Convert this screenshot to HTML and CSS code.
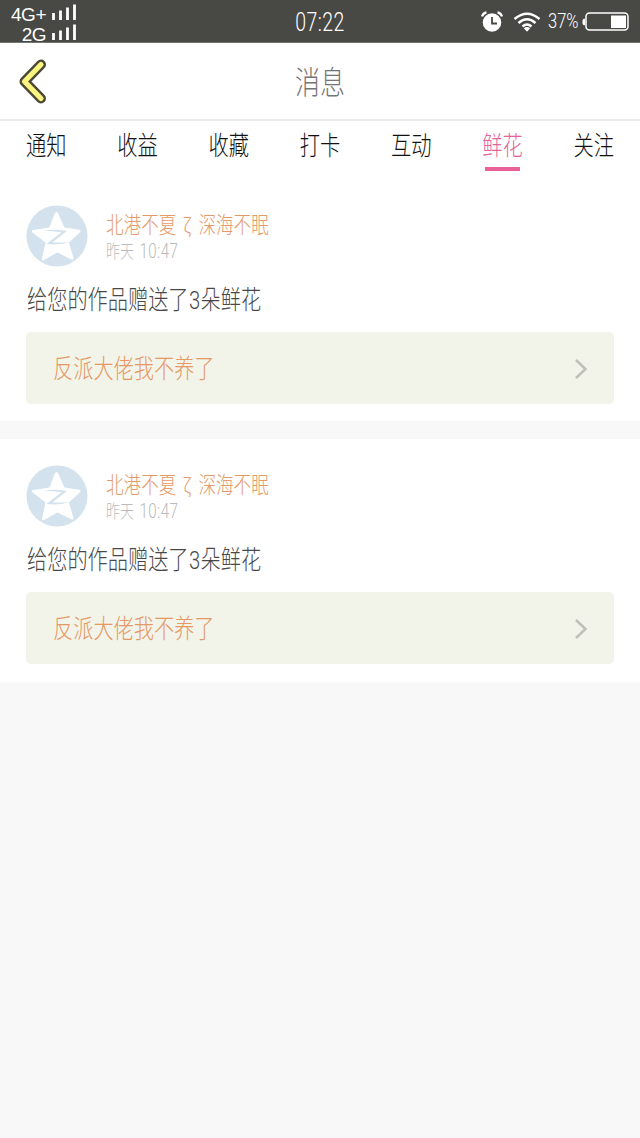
FILE: index.html
```html
<!DOCTYPE html>
<html lang="zh-CN">
<head>
<meta charset="utf-8">
<title>消息</title>
<link rel="stylesheet" href="styles.css">
</head>
<body>
<svg class="defs" aria-hidden="true">
  <symbol id="star" viewBox="0 0 62 62">
    <circle cx="31" cy="31" r="30.500" fill="#d3e2ed"/>
    <path d="M30.500 7Q31.500 7 32.200 8.500L38.500 22.500L53.500 24.800Q55.500 25.500 54 27.300L43 37.500L47.500 53Q47.500 55.500 45.500 54.500L31.500 47.500L18 55Q15.500 56 16 53.500L19.500 37.500L6.500 27.500Q5 25.800 7 25L23.500 22.500L28.700 8.500Q29.500 7 30.500 7Z" fill="#fff"/>
    <path d="M18 25.500Q29 23.700 41 26L26.500 37.300Q34 38 44 37Q34 40.500 20.500 39L35.500 27.300Q27 26 18 25.500Z" fill="#d3e2ed"/>
  </symbol>
</svg>
<header class="status">
  <div class="signals">
    <div class="signal"><span class="net">4G+</span><svg width="25" height="18"><path d="M1.500 10v7M8.500 7.500v9.500M15.500 4.500v12.500M22.500 1.500v15.500" stroke="#fff" stroke-width="2.800"/></svg></div>
    <div class="signal"><span class="net">2G</span><svg width="25" height="18"><path d="M1.500 10v7M8.500 7.500v9.500M15.500 4.500v12.500M22.500 1.500v15.500" stroke="#fff" stroke-width="2.800"/></svg></div>
  </div>
  <span class="clock tall">07:22</span>
  <div class="right">
    <svg width="22" height="22" viewBox="0 0 22 22"><circle cx="11" cy="11.500" r="9.300" fill="#fff"/><path d="M1 5.500Q2 2 5.500 1.300M16.500 1.300Q20 2 21 5.500" fill="none" stroke="#fff" stroke-width="2.200"/><path d="M11 6V12.500H16" fill="none" stroke="#484844" stroke-width="1.800"/></svg>
    <svg class="wifi" width="28" height="20" viewBox="0 0 28 20"><path d="M1.500 7Q14-3.500 26.500 7M5.500 11Q14 3.500 22.500 11M9.500 14.500Q14 10.500 18.500 14.500" fill="none" stroke="#fff" stroke-width="2.500"/><path d="M10.800 16.200Q14 13.800 17.200 16.200L14 19.700Z" fill="#fff"/></svg>
    <span class="percent tall">37%</span>
    <svg class="battery" width="48" height="20" viewBox="0 0 48 20"><path d="M2.500 7Q1 7 1 8.500v3Q1 13 2.500 13Z" fill="#fff" stroke="#fff"/><rect x="4" y="1" width="42" height="17" rx="3.500" fill="none" stroke="#fff" stroke-width="1.500"/><rect x="29" y="3.500" width="15" height="12.500" fill="#fff"/></svg>
  </div>
</header>
<div class="titlebar">
  <svg class="back" width="32" height="46" viewBox="0 0 32 46"><path d="M24 6.500L7.500 23.500L24 40.500" fill="none" stroke="#4b4a38" stroke-width="10" stroke-linecap="round" stroke-linejoin="round"/><path d="M24 6.500L7.500 23.500L24 40.500" fill="none" stroke="#fbf47e" stroke-width="5.200" stroke-linecap="round" stroke-linejoin="round"/></svg>
  <h1 class="title tall">消息</h1>
</div>
<nav class="tabs">
  <span class="tab"><span class="tall">通知</span></span>
  <span class="tab"><span class="tall">收益</span></span>
  <span class="tab"><span class="tall">收藏</span></span>
  <span class="tab"><span class="tall">打卡</span></span>
  <span class="tab"><span class="tall">互动</span></span>
  <span class="tab active"><span class="tall">鲜花</span></span>
  <span class="tab"><span class="tall">关注</span></span>
</nav>
<main>
  <article class="card">
    <div class="author">
      <svg class="avatar"><use href="#star"/></svg>
      <div class="meta"><div class="name tall">北港不夏<span class="zeta">ζ</span>深海不眠</div><div class="time tall">昨天 <span>10:47</span></div></div>
    </div>
    <p class="message tall">给您的作品赠送了<span class="count">3</span>朵鲜花</p>
    <div class="work"><span class="tall">反派大佬我不养了</span><svg width="14" height="22"><path d="M2 2L11.500 11L2 20" fill="none" stroke="#bfc0b9" stroke-width="2.500"/></svg></div>
  </article>
  <article class="card">
    <div class="author">
      <svg class="avatar"><use href="#star"/></svg>
      <div class="meta"><div class="name tall">北港不夏<span class="zeta">ζ</span>深海不眠</div><div class="time tall">昨天 <span>10:47</span></div></div>
    </div>
    <p class="message tall">给您的作品赠送了<span class="count">3</span>朵鲜花</p>
    <div class="work"><span class="tall">反派大佬我不养了</span><svg width="14" height="22"><path d="M2 2L11.500 11L2 20" fill="none" stroke="#bfc0b9" stroke-width="2.500"/></svg></div>
  </article>
</main>
</body>
</html>
```
FILE: styles.css
```css
* { box-sizing: border-box; }
body {
  margin: 0;
  min-height: 1138px;
  background: #f8f8f8;
  font-family: Roboto, "Noto Sans CJK SC", sans-serif;
  font-weight: 300;
  white-space: nowrap;
}
svg { display: block; flex: none; }
.defs { display: none; }
/* Condensed lettering: set at its width, stretched vertically. */
.tall { display: block; transform: scaleY(1.28); }
.status {
  height: 43px;
  display: grid;
  grid-template-columns: 1fr auto 1fr;
  align-items: start;
  background: #484844;
  border-bottom: 1px solid #73736f;
  color: #fff;
}
.signals { padding: 3px 0 0; width: 77px; }
.signal { display: flex; justify-content: flex-end; height: 20px; gap: 6px; }
.net { font-family: "Liberation Sans", sans-serif; font-size: 19px; line-height: 23px; font-weight: 400; letter-spacing: -.5px; }
.clock { margin-top: 11px; font-size: 19.500px; line-height: 24px; letter-spacing: .4px; }
.right { display: flex; align-items: center; justify-content: flex-end; padding: 11px 9px 0 0; }
.wifi { margin: 0 7px 0 10px; }
.percent { width: 31px; font-size: 16.500px; line-height: 22px; }
.battery { margin-left: 3px; margin-right: 1px; }
.titlebar {
  height: 78px;
  display: grid;
  grid-template-columns: 1fr auto 1fr;
  align-items: center;
  background: #fff;
  border-bottom: 2px solid #ebebeb;
}
.back { margin-left: 17px; }
.title { margin: 0; padding-top: 4px; font-size: 25px; line-height: 30px; font-weight: 300; color: #747474; }
.tabs {
  height: 54px;
  display: flex;
  justify-content: space-between;
  padding: 9px 26px 0;
  background: #fff;
  color: #111;
  font-size: 20.300px;
  line-height: 32px;
}
.active { color: #e3649b; }
.active::after { content: ""; display: block; width: 35px; height: 4px; margin: 5px auto 0; background: #ea6298; }
.card { height: 246px; padding: 30px 26px 0; background: #fff; }
.card + .card { height: 243px; margin-top: 18px; padding-top: 26px; }
.author { display: flex; gap: 18px; }
.avatar { width: 62px; height: 62px; }
.meta { padding-top: 5px; }
.name { font-size: 17.600px; line-height: 30px; color: #e59b69; }
.zeta { display: inline-block; width: 22px; text-align: center; }
.time { font-size: 14px; line-height: 24px; color: #bababa; }
.time span { font-size: 15.200px; margin-left: 2px; letter-spacing: .4px; }
.message { margin: 18px 0 0 1px; font-size: 20.200px; line-height: 31px; color: #484848; }
.count { display: inline-block; width: 12px; text-align: center; }
.work {
  height: 72px;
  margin-top: 16px;
  padding: 0 26px 0 27px;
  display: flex;
  align-items: center;
  justify-content: space-between;
  border-radius: 5px;
  background: #f2f4ea;
  color: #e59863;
  font-size: 20.200px;
}
.work .tall { line-height: 30px; padding-top: 1px; }
.work svg { margin-top: 2px; }
```
